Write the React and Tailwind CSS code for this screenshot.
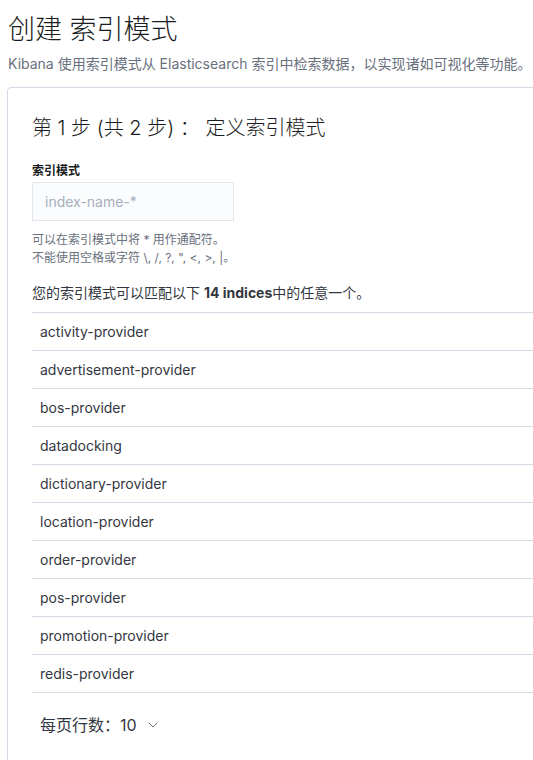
import React from 'react';
import { ChevronDown } from 'lucide-react';

const indices = [
  'activity-provider',
  'advertisement-provider',
  'bos-provider',
  'datadocking',
  'dictionary-provider',
  'location-provider',
  'order-provider',
  'pos-provider',
  'promotion-provider',
  'redis-provider',
];

const font = { fontFamily: '"Inter", "Noto Sans CJK SC", sans-serif' };

const App = () => {
  return (
    <div className="w-[533px] h-[760px] overflow-hidden bg-white text-[#343741]" style={font}>
      {/* Page header */}
      <div className="pl-2 pt-[12px]">
        <h1 className="text-[27px] leading-[36px] font-light text-[#1a1c21]">创建 索引模式</h1>
        <p className="mt-[6px] text-[14px] leading-[20px] text-[#69707d] whitespace-nowrap">
          Kibana 使用索引模式从 Elasticsearch 索引中检索数据，以实现诸如可视化等功能。
        </p>
      </div>

      {/* Card */}
      <div className="ml-[7px] mt-[13px] w-[560px] border border-[#d3dae6] rounded-[4px] bg-white pl-6 pt-[26px] pb-10">
        <h2 className="text-[20px] leading-[28px] font-light text-[#1a1c21] whitespace-nowrap">
          第 1 步 (共 2 步) ： 定义索引模式
        </h2>

        <div className="mt-[21px]">
          <label className="block text-[12px] leading-[16px] font-bold text-[#1a1c21]">索引模式</label>
          <div className="mt-[3px] w-[202px] h-[39px] bg-[#fbfcfd] border border-[#e3e6ea] flex items-center px-3">
            <span className="text-[14px] text-[#a7afbe]">index-name-*</span>
          </div>
          <div className="mt-[10px] text-[12px] leading-[18px] text-[#69707d]">
            <p>可以在索引模式中将 * 用作通配符。</p>
            <p>不能使用空格或字符 \, /, ?, ", &lt;, &gt;, |。</p>
          </div>
        </div>

        <p className="mt-[16px] text-[14px] leading-[20px] text-[#343741] whitespace-nowrap">
          您的索引模式可以匹配以下 <span className="font-bold">14 indices</span>中的任意一个。
        </p>

        <div className="mt-[9px] border-t border-[#d3dae6]">
          {indices.map((name) => (
            <div key={name} className="h-[38px] border-b border-[#d3dae6] flex items-center pl-2 text-[14px] text-[#343741]">
              {name}
            </div>
          ))}
        </div>

        <div className="mt-[20px] pl-2 flex items-center gap-2 text-[16px] text-[#343741]">
          <span>每页行数：10</span>
          <ChevronDown className="w-4 h-4 text-[#69707d]" strokeWidth={1.5} />
        </div>
      </div>
    </div>
  );
};

export default App;
